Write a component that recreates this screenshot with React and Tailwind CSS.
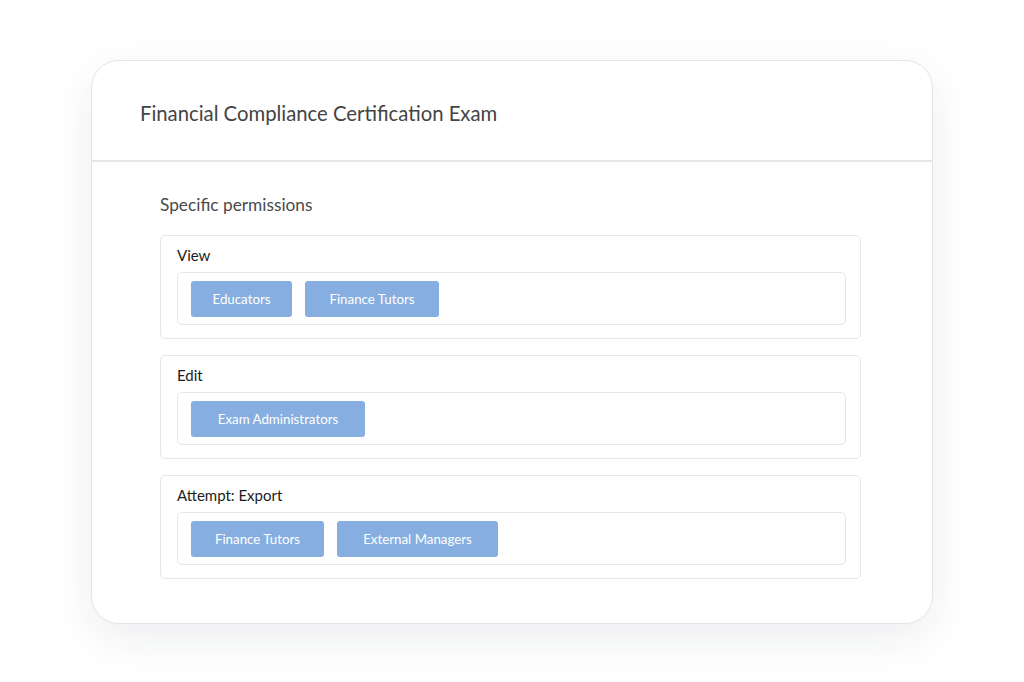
import React from 'react';

const SECTIONS = [
  { label: 'View', groups: [{ name: 'Educators', w: 'w-[101px]' }, { name: 'Finance Tutors', w: 'w-[134px]' }] },
  { label: 'Edit', groups: [{ name: 'Exam Administrators', w: 'w-[174px]' }] },
  { label: 'Attempt: Export', groups: [{ name: 'Finance Tutors', w: 'w-[133px]' }, { name: 'External Managers', w: 'w-[161px]' }] },
];

function Chip({ name, w }) {
  return (
    <span className={'inline-flex h-[36px] items-center justify-center rounded-[3px] bg-[#86aee1] pt-[2px] text-[13.3px] text-white ' + w}>
      {name}
    </span>
  );
}

function PermissionSection({ label, groups }) {
  return (
    <div className="rounded-[5px] border border-[#e6e7ea] pt-[9px] pb-[13px] pl-4 pr-[14px]">
      <div className="h-[20px] text-[15px] leading-[20px] text-[#1c1c1c]">{label}</div>
      <div className="mt-[7px] flex gap-[13px] rounded-[5px] border border-[#e6e7ea] px-[13px] pt-[8px] pb-[7px]">
        {groups.map((g, i) => (
          <Chip key={i} name={g.name} w={g.w} />
        ))}
      </div>
    </div>
  );
}

export default function App() {
  return (
    <div className="min-h-[682px] bg-white pt-[60px] font-['Lato','Liberation_Sans',sans-serif]">
      <div className="ml-[91px] w-[842px] rounded-[28px] border border-[#e4e5e8] bg-white shadow-[0_14px_44px_rgba(30,40,60,0.08)]">
        <div className="h-[101px] border-b-2 border-[#e6e7ea] px-12 pt-[40px]">
          <h1 className="text-[20.3px] leading-[24px] text-[#444]">Financial Compliance Certification Exam</h1>
        </div>
        <div className="pl-[68px] pr-[71px] pt-[31px] pb-[44px]">
          <h2 className="h-[24px] text-[17.3px] leading-[24px] text-[#4a4a4a]">Specific permissions</h2>
          <div className="mt-[18px] flex flex-col gap-[16px]">
            {SECTIONS.map((s, i) => (
              <PermissionSection key={i} label={s.label} groups={s.groups} />
            ))}
          </div>
        </div>
      </div>
    </div>
  );
}
